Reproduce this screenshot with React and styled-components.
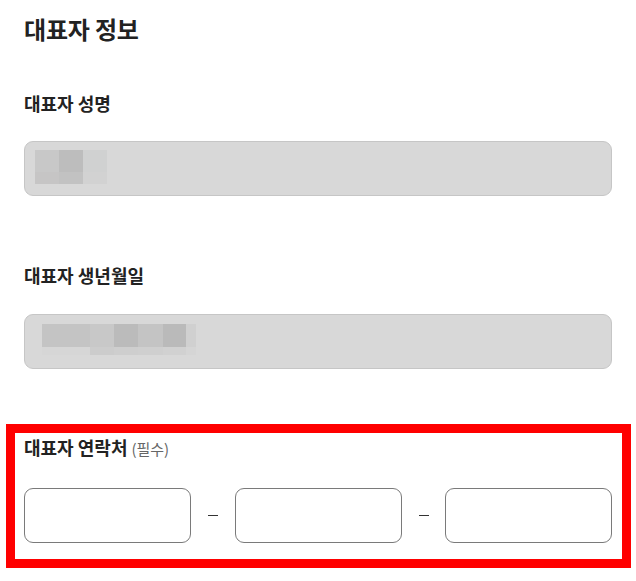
import React from "react";
import styled, { createGlobalStyle } from "styled-components";

const GlobalStyle = createGlobalStyle`
  html, body {
    margin: 0;
    padding: 0;
    background: #ffffff;
  }
  body {
    font-family: "Noto Sans CJK KR", "Noto Sans", "Liberation Sans", sans-serif;
    color: #222222;
  }
`;

const Page = styled.div`
  width: 636px;
  padding-top: 11px;
  box-sizing: border-box;
`;

const Block = styled.div`
  padding: 0 24px;
`;

const Title = styled.h2`
  margin: 0;
  font-size: 24px;
  line-height: 36px;
  font-weight: 700;
  letter-spacing: -0.2px;
  color: #222222;
`;

const Label = styled.div`
  margin-top: ${(p) => p.$top || 0}px;
  font-size: 18px;
  line-height: 28px;
  font-weight: 700;
  color: #222222;
`;

const Required = styled.span`
  margin-left: 4px;
  font-size: 15px;
  font-weight: 400;
  color: #666666;
`;

const ReadOnlyField = styled.div`
  margin-top: ${(p) => p.$top || 0}px;
  height: 55px;
  box-sizing: border-box;
  background: #d8d8d8;
  border: 1px solid #c6c6c6;
  border-radius: 9px;
  padding: ${(p) => p.$pad};
  display: flex;
  align-items: flex-start;
`;

const Mosaic = styled.div`
  display: flex;
  flex-direction: column;
`;

const MosaicRow = styled.div`
  display: flex;
  height: ${(p) => p.$h}px;
`;

const Pixel = styled.div`
  width: ${(p) => p.$w}px;
  height: 100%;
  background: ${(p) => p.$c};
`;

const Highlight = styled.section`
  margin: 55px 5px 0 6px;
  border: 9px solid #ff0000;
  padding: 0 10px 16px 9px;
`;

const PhoneRow = styled.div`
  margin-top: 25px;
  display: flex;
  align-items: center;
`;

const PhoneInput = styled.input`
  width: 167px;
  height: 55px;
  box-sizing: border-box;
  border: 1px solid #7a7a7a;
  border-radius: 9px;
  background: #ffffff;
  padding: 0 12px;
  font-size: 16px;
  font-family: inherit;
  outline: none;
`;

const Separator = styled.div`
  flex: 1;
  display: flex;
  justify-content: center;
`;

const Dash = styled.span`
  width: 10px;
  height: 1px;
  background: #333333;
  margin-left: 1px;
`;

const nameMosaic = [
  { h: 22, cells: [[24, "#c8c8c8"], [24, "#bdbdbd"], [24, "#d0d1d1"]] },
  { h: 12, cells: [[24, "#c6c5c5"], [24, "#c2c2c2"], [24, "#d2d2d2"]] },
];

const birthMosaic = [
  {
    h: 23,
    cells: [
      [48, "#c4c4c4"],
      [24, "#c8c8c8"],
      [24, "#bbbbbb"],
      [25, "#c4c4c4"],
      [23, "#bababa"],
      [10, "#d0d0d0"],
    ],
  },
  {
    h: 8,
    cells: [
      [48, "#d6d6d6"],
      [24, "#cccccc"],
      [24, "#cecece"],
      [25, "#cfcfcf"],
      [23, "#d1d1d1"],
      [10, "#d5d5d5"],
    ],
  },
];

const Blur = ({ rows }) => (
  <Mosaic>
    {rows.map((row, i) => (
      <MosaicRow key={i} $h={row.h}>
        {row.cells.map(([w, c], j) => (
          <Pixel key={j} $w={w} $c={c} />
        ))}
      </MosaicRow>
    ))}
  </Mosaic>
);

export default function App() {
  return (
    <Page>
      <GlobalStyle />
      <Block>
        <Title>대표자 정보</Title>
        <Label $top={42}>대표자 성명</Label>
        <ReadOnlyField $top={24} $pad="8px 0 0 10px">
          <Blur rows={nameMosaic} />
        </ReadOnlyField>
        <Label $top={65}>대표자 생년월일</Label>
        <ReadOnlyField $top={25} $pad="9px 0 0 17px">
          <Blur rows={birthMosaic} />
        </ReadOnlyField>
      </Block>
      <Highlight>
        <Label>
          대표자 연락처<Required>(필수)</Required>
        </Label>
        <PhoneRow>
          <PhoneInput type="text" />
          <Separator>
            <Dash />
          </Separator>
          <PhoneInput type="text" />
          <Separator>
            <Dash />
          </Separator>
          <PhoneInput type="text" />
        </PhoneRow>
      </Highlight>
    </Page>
  );
}
